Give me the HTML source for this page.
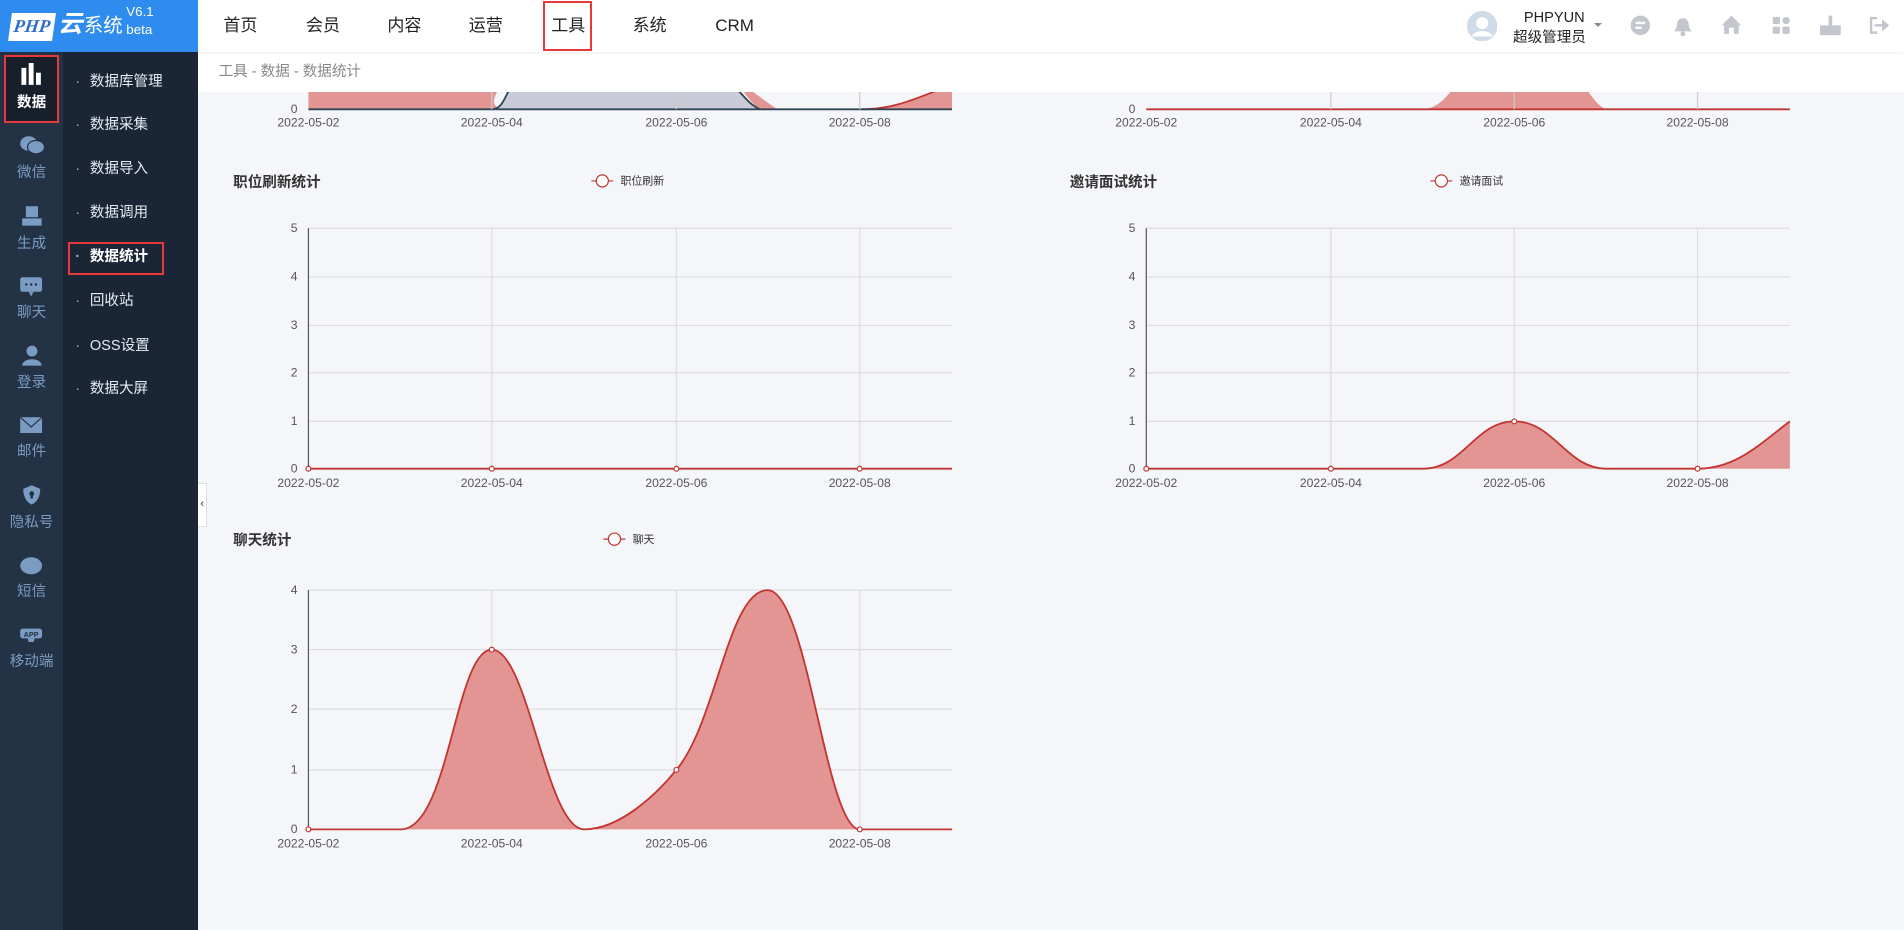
<!DOCTYPE html>
<html><head><meta charset="utf-8">
<style>
html{zoom:1.21429}
body{margin:0;width:1568px;height:766px;overflow:hidden;background:#f5f6fa;font-family:"Liberation Sans","Noto Sans CJK SC",sans-serif;position:relative}
.abs{position:absolute}
#top{left:0;top:0;width:1568px;height:43px;background:#fff;box-shadow:0 1px 3px rgba(0,0,0,.08);z-index:5}
#logo{left:0;top:0;width:163px;height:43px;background:#2f8cef;color:#fff}
.nav{top:13px;font-size:14px;line-height:16px;color:#222}
#side1{left:0;top:43px;width:52px;height:723px;background:#243245;z-index:4}
#side2{left:52px;top:43px;width:111px;height:723px;background:#1a2536;z-index:4}
.si{position:absolute;left:0;width:52px;text-align:center;color:#7a9bc2;font-size:12px;line-height:14px}
.sm{position:absolute;left:9px;color:#e6ebf2;font-size:12px;line-height:14px}
.sm:before{content:"·";position:absolute;left:-12px;top:0;color:#aab}
#bc{left:163px;top:43px;width:1405px;height:33px;background:#fff;z-index:3}
.ic{fill:#c3c6cc}
</style></head><body>
<svg class="abs" style="left:0;top:0" width="1568" height="766" font-family="Liberation Sans,sans-serif" font-size="10" fill="#555">
<path d="M254 60 L420 60 C405 80 400 90 420 90 L254 90 Z" fill="#e39594"/>
<path d="M405 90 C420 90 415 60 440 60 L590 60 C610 70 615 90 630 90 Z" fill="#cacbd8"/>
<path d="M405 90 C420 90 415 60 440 60" stroke="#2f4554" stroke-width="1.5" fill="none"/>
<path d="M590 60 C610 70 615 90 630 90" stroke="#2f4554" stroke-width="1.5" fill="none"/>
<path d="M598 60 C612 70 618 90 630 90 L640 90 Z" fill="#e39594"/>
<path d="M710 90 C740 90 760 78 784 70 L784 90 Z" fill="#e39594"/>
<path d="M710 90 C740 90 760 78 784 70" stroke="#c23531" stroke-width="1.5" fill="none"/>
<line x1="254" y1="90" x2="784" y2="90" stroke="#2f4554" stroke-width="1.5"/>
<g stroke="#ccc"><line x1="405" y1="60" x2="405" y2="90"/><line x1="557" y1="60" x2="557" y2="90"/><line x1="708" y1="60" x2="708" y2="90"/></g>
<text x="245" y="93" text-anchor="end">0</text>
<g text-anchor="middle"><text x="254" y="104">2022-05-02</text><text x="405" y="104">2022-05-04</text><text x="557" y="104">2022-05-06</text><text x="708" y="104">2022-05-08</text></g>
<path d="M1170 90 C1190 90 1195 70 1210 60 L1295 60 C1310 75 1315 90 1325 90 Z" fill="#e39594"/>
<line x1="944" y1="90" x2="1474" y2="90" stroke="#c23531" stroke-width="1.5"/>
<g stroke="#ccc"><line x1="1096" y1="60" x2="1096" y2="90"/><line x1="1247" y1="60" x2="1247" y2="90"/><line x1="1398" y1="60" x2="1398" y2="90"/></g>
<text x="935" y="93" text-anchor="end">0</text>
<g text-anchor="middle"><text x="944" y="104">2022-05-02</text><text x="1096" y="104">2022-05-04</text><text x="1247" y="104">2022-05-06</text><text x="1398" y="104">2022-05-08</text></g>

<text x="192" y="154" font-size="12" font-weight="bold" fill="#333" font-family="Liberation Sans,Noto Sans CJK SC,sans-serif">职位刷新统计</text>
<line x1="487" y1="149" x2="505" y2="149" stroke="#c23531"/><circle cx="496" cy="149" r="5" fill="#fff" stroke="#c23531"/>
<text x="511" y="152" font-size="9" fill="#333" font-family="Liberation Sans,Noto Sans CJK SC,sans-serif">职位刷新</text>
<g stroke="#ddd"><line x1="254" y1="188" x2="784" y2="188"/><line x1="254" y1="228" x2="784" y2="228"/><line x1="254" y1="268" x2="784" y2="268"/><line x1="254" y1="307" x2="784" y2="307"/><line x1="254" y1="347" x2="784" y2="347"/>
<line x1="405" y1="188" x2="405" y2="386"/><line x1="557" y1="188" x2="557" y2="386"/><line x1="708" y1="188" x2="708" y2="386"/></g>
<line x1="254" y1="188" x2="254" y2="386" stroke="#555"/>
<line x1="254" y1="386" x2="784" y2="386" stroke="#c23531" stroke-width="1.5"/>
<g fill="#fff" stroke="#c23531"><circle cx="254" cy="386" r="2"/><circle cx="405" cy="386" r="2"/><circle cx="557" cy="386" r="2"/><circle cx="708" cy="386" r="2"/></g>
<g text-anchor="end"><text x="245" y="191">5</text><text x="245" y="231">4</text><text x="245" y="271">3</text><text x="245" y="310">2</text><text x="245" y="350">1</text><text x="245" y="389">0</text></g>
<g text-anchor="middle"><text x="254" y="401">2022-05-02</text><text x="405" y="401">2022-05-04</text><text x="557" y="401">2022-05-06</text><text x="708" y="401">2022-05-08</text></g>

<text x="881" y="154" font-size="12" font-weight="bold" fill="#333" font-family="Liberation Sans,Noto Sans CJK SC,sans-serif">邀请面试统计</text>
<line x1="1178" y1="149" x2="1196" y2="149" stroke="#c23531"/><circle cx="1187" cy="149" r="5" fill="#fff" stroke="#c23531"/>
<text x="1202" y="152" font-size="9" fill="#333" font-family="Liberation Sans,Noto Sans CJK SC,sans-serif">邀请面试</text>
<g stroke="#ddd"><line x1="944" y1="188" x2="1474" y2="188"/><line x1="944" y1="228" x2="1474" y2="228"/><line x1="944" y1="268" x2="1474" y2="268"/><line x1="944" y1="307" x2="1474" y2="307"/><line x1="944" y1="347" x2="1474" y2="347"/>
<line x1="1096" y1="188" x2="1096" y2="386"/><line x1="1247" y1="188" x2="1247" y2="386"/><line x1="1398" y1="188" x2="1398" y2="386"/></g>
<line x1="944" y1="188" x2="944" y2="386" stroke="#555"/>
<path d="M1172 386 C1205 386 1215 347 1247 347 C1280 347 1290 386 1323 386 L1398 386 C1430 386 1450 365 1474 347 L1474 386 Z" fill="#e39594"/>
<path d="M944 386 L1172 386 C1205 386 1215 347 1247 347 C1280 347 1290 386 1323 386 L1398 386 C1430 386 1450 365 1474 347" fill="none" stroke="#c23531" stroke-width="1.5"/>
<g fill="#fff" stroke="#c23531"><circle cx="944" cy="386" r="2"/><circle cx="1096" cy="386" r="2"/><circle cx="1247" cy="347" r="2"/><circle cx="1398" cy="386" r="2"/></g>
<g text-anchor="end"><text x="935" y="191">5</text><text x="935" y="231">4</text><text x="935" y="271">3</text><text x="935" y="310">2</text><text x="935" y="350">1</text><text x="935" y="389">0</text></g>
<g text-anchor="middle"><text x="944" y="401">2022-05-02</text><text x="1096" y="401">2022-05-04</text><text x="1247" y="401">2022-05-06</text><text x="1398" y="401">2022-05-08</text></g>

<text x="192" y="449" font-size="12" font-weight="bold" fill="#333" font-family="Liberation Sans,Noto Sans CJK SC,sans-serif">聊天统计</text>
<line x1="497" y1="444" x2="515" y2="444" stroke="#c23531"/><circle cx="506" cy="444" r="5" fill="#fff" stroke="#c23531"/>
<text x="521" y="447" font-size="9" fill="#333" font-family="Liberation Sans,Noto Sans CJK SC,sans-serif">聊天</text>
<g stroke="#ddd"><line x1="254" y1="486" x2="784" y2="486"/><line x1="254" y1="535" x2="784" y2="535"/><line x1="254" y1="584" x2="784" y2="584"/><line x1="254" y1="634" x2="784" y2="634"/>
<line x1="405" y1="486" x2="405" y2="683"/><line x1="557" y1="486" x2="557" y2="683"/><line x1="708" y1="486" x2="708" y2="683"/></g>
<line x1="254" y1="486" x2="254" y2="683" stroke="#555"/>
<path d="M330 683 C370 683 375 535 405 535 C435 535 450 683 481 683 C510 683 540 655 557 634 C590 595 600 486 632 486 C665 486 680 683 708 683 Z" fill="#e39594"/>
<path d="M254 683 L330 683 C370 683 375 535 405 535 C435 535 450 683 481 683 C510 683 540 655 557 634 C590 595 600 486 632 486 C665 486 680 683 708 683 L784 683" fill="none" stroke="#c23531" stroke-width="1.5"/>
<g fill="#fff" stroke="#c23531"><circle cx="254" cy="683" r="2"/><circle cx="405" cy="535" r="2"/><circle cx="557" cy="634" r="2"/><circle cx="708" cy="683" r="2"/></g>
<g text-anchor="end"><text x="245" y="489">4</text><text x="245" y="538">3</text><text x="245" y="587">2</text><text x="245" y="637">1</text><text x="245" y="686">0</text></g>
<g text-anchor="middle"><text x="254" y="698">2022-05-02</text><text x="405" y="698">2022-05-04</text><text x="557" y="698">2022-05-06</text><text x="708" y="698">2022-05-08</text></g>
</svg>

<div id="bc" class="abs"><div class="abs" style="left:17px;top:10px;font-size:12px;line-height:14px;color:#888">工具 - 数据 - 数据统计</div></div>
<div class="abs" style="left:163px;top:398px;width:7px;height:34px;background:#fff;border:1px solid #ddd;border-left:0;font-size:9px;line-height:34px;color:#333;text-align:center;z-index:4">‹</div>

<div id="top" class="abs">
<div id="logo" class="abs">
 <div class="abs" style="left:8px;top:11px;width:36px;height:23px;background:#fff;transform:skewX(-8deg);color:#2f6fc0;font-weight:bold;font-style:italic;font-size:15px;line-height:23px;text-align:center;font-family:'Liberation Serif',serif">PHP</div>
 <div class="abs" style="left:48px;top:10px;font-size:20px;line-height:22px;font-weight:bold;font-style:italic">云</div>
 <div class="abs" style="left:69px;top:13px;font-size:16px;line-height:18px">系统</div>
 <div class="abs" style="left:104px;top:4px;font-size:11px;line-height:12px">V6.1</div>
 <div class="abs" style="left:104px;top:19px;font-size:11px;line-height:12px">beta</div>
</div>
<div class="abs nav" style="left:184px">首页</div>
<div class="abs nav" style="left:252px">会员</div>
<div class="abs nav" style="left:319px">内容</div>
<div class="abs nav" style="left:386px">运营</div>
<div class="abs" style="left:447px;top:1px;width:37px;height:38px;border:2px solid #e8393a"></div>
<div class="abs nav" style="left:454px">工具</div>
<div class="abs nav" style="left:521px">系统</div>
<div class="abs nav" style="left:589px">CRM</div>
<svg class="abs" style="left:1208px;top:9px" width="25" height="25"><circle cx="12.5" cy="12.5" r="12.5" fill="#cfdbe8"/><circle cx="12.5" cy="10" r="5" fill="#fff"/><path d="M4 21 C6 15 19 15 21 21 Z" fill="#fff"/></svg>
<div class="abs" style="left:1255px;top:8px;font-size:12px;line-height:14px;color:#222">PHPYUN</div>
<div class="abs" style="left:1246px;top:25px;font-size:12px;line-height:14px;color:#222">超级管理员</div>
<div class="abs" style="left:1313px;top:19px;border:4px solid transparent;border-top-color:#888"></div>
<svg class="abs" style="left:1340px;top:10px" width="220" height="24">
<circle class="ic" cx="11" cy="11" r="8"/><rect x="7" y="8" width="8" height="2" fill="#fff"/><rect x="7" y="12" width="5" height="2" fill="#fff"/>
<path class="ic" d="M46 5 C42 5 41 9 41 12 L39 16 L53 16 L51 12 C51 9 50 5 46 5 Z"/><circle class="ic" cx="46" cy="18" r="2"/>
<path class="ic" d="M86 3 L78 11 L80 11 L80 18 L84 18 L84 13 L88 13 L88 18 L92 18 L92 11 L94 11 Z"/>
<rect class="ic" x="120" y="4" width="6" height="6" rx="1"/><rect class="ic" x="128" y="4" width="6" height="6" rx="3"/><rect class="ic" x="120" y="12" width="6" height="6" rx="1"/><rect class="ic" x="128" y="12" width="6" height="6" rx="1"/>
<rect class="ic" x="166" y="3" width="3" height="8"/><path class="ic" d="M159 11 L176 11 L176 19 L159 19 Z"/>
<path class="ic" d="M200 4 L206 4 L206 6 L202 6 L202 16 L206 16 L206 18 L200 18 Z M204 10 L210 10 L210 6 L216 11 L210 16 L210 12 L204 12 Z"/>
</svg>
</div>

<div id="side1" class="abs">
 <div class="abs" style="left:3px;top:2px;width:42px;height:53px;background:#171f2b;border:2px solid #e8393a"></div>
 <svg class="abs" style="left:16px;top:9px" width="20" height="20"><rect x="2" y="4" width="4" height="14" fill="#fff"/><rect x="8" y="0" width="4" height="18" fill="#fff"/><rect x="14" y="8" width="4" height="10" fill="#fff"/></svg>
 <div class="si" style="top:35px;color:#fff;font-weight:bold">数据</div>
 <svg class="abs" style="left:16px;top:68px" width="22" height="16"><ellipse cx="8" cy="7" rx="7" ry="6" fill="#7a9bc2"/><ellipse cx="14" cy="10" rx="7" ry="5.5" fill="#7a9bc2" stroke="#243245"/></svg>
 <div class="si" style="top:93px">微信</div>
 <svg class="abs" style="left:17px;top:126px" width="18" height="18"><rect x="4" y="1" width="10" height="9" fill="#7a9bc2"/><rect x="1" y="11" width="16" height="6" fill="#7a9bc2"/></svg>
 <div class="si" style="top:151px">生成</div>
 <svg class="abs" style="left:16px;top:184px" width="20" height="18"><rect x="1" y="1" width="18" height="12" rx="2" fill="#7a9bc2"/><path d="M8 13 L10 17 L12 13 Z" fill="#7a9bc2"/><circle cx="6" cy="7" r="1" fill="#243245"/><circle cx="10" cy="7" r="1" fill="#243245"/><circle cx="14" cy="7" r="1" fill="#243245"/></svg>
 <div class="si" style="top:208px">聊天</div>
 <svg class="abs" style="left:17px;top:241px" width="18" height="18"><circle cx="9" cy="5" r="4.5" fill="#7a9bc2"/><path d="M1 17 C1 10 17 10 17 17 Z" fill="#7a9bc2"/></svg>
 <div class="si" style="top:266px">登录</div>
 <svg class="abs" style="left:16px;top:300px" width="20" height="16"><rect x="1" y="1" width="18" height="13" fill="#7a9bc2"/><path d="M1 1 L10 9 L19 1" stroke="#243245" fill="none"/></svg>
 <div class="si" style="top:323px">邮件</div>
 <svg class="abs" style="left:18px;top:356px" width="16" height="18"><path d="M8 1 L15 4 C15 11 12 15 8 17 C4 15 1 11 1 4 Z" fill="#7a9bc2"/><circle cx="8" cy="8" r="2" fill="#243245"/><rect x="7" y="8" width="2" height="4" fill="#243245"/></svg>
 <div class="si" style="top:381px">隐私号</div>
 <svg class="abs" style="left:16px;top:415px" width="20" height="16"><ellipse cx="10" cy="8" rx="9" ry="7" fill="#7a9bc2"/></svg>
 <div class="si" style="top:438px">短信</div>
 <svg class="abs" style="left:16px;top:472px" width="20" height="16"><rect x="1" y="3" width="18" height="8" rx="2" fill="#7a9bc2"/><text x="10" y="10" font-size="6" text-anchor="middle" fill="#243245" font-weight="bold">APP</text><path d="M7 11 L13 11 L12 14 L8 14 Z" fill="#7a9bc2"/></svg>
 <div class="si" style="top:496px">移动端</div>
</div>
<div id="side2" class="abs">
 <div class="sm" style="top:18px;left:22px">数据库管理</div>
 <div class="sm" style="top:53px;left:22px">数据采集</div>
 <div class="sm" style="top:90px;left:22px">数据导入</div>
 <div class="sm" style="top:126px;left:22px">数据调用</div>
 <div class="abs" style="left:4px;top:156px;width:76px;height:24px;border:2px solid #e8393a"></div>
 <div class="sm" style="top:162px;left:22px;font-weight:bold;color:#fff">数据统计</div>
 <div class="sm" style="top:198px;left:22px">回收站</div>
 <div class="sm" style="top:235px;left:22px">OSS设置</div>
 <div class="sm" style="top:271px;left:22px">数据大屏</div>
</div>
</body></html>
